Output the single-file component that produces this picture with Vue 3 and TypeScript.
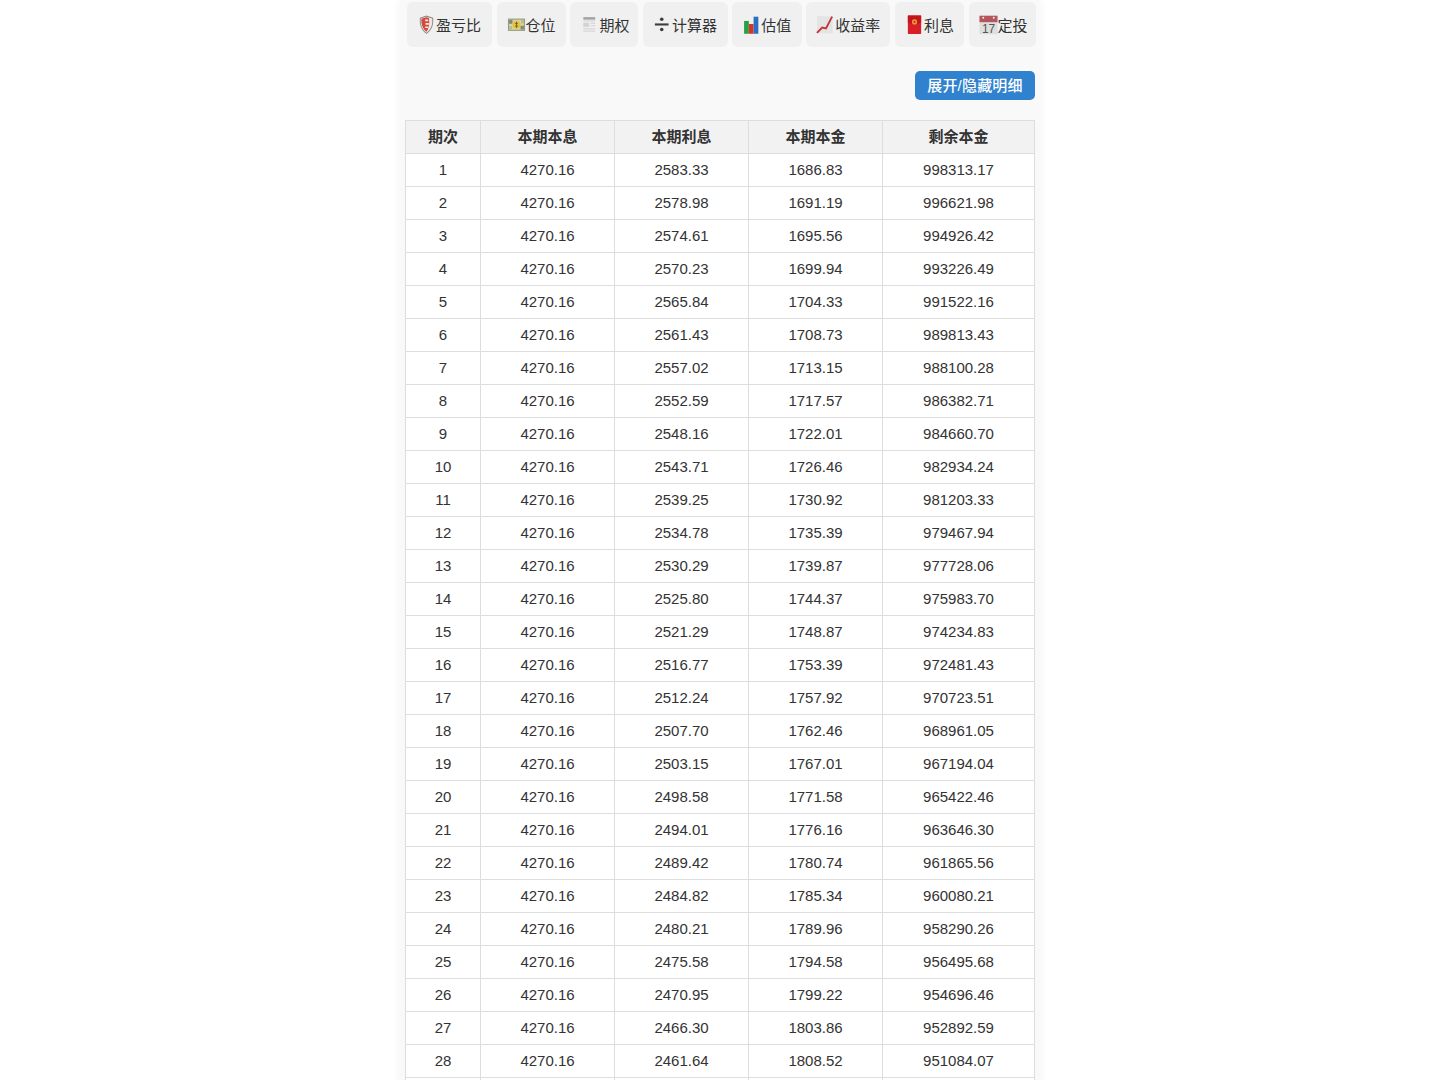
<script setup lang="ts">
const tools = [
  { icon: 'shield', label: '盈亏比', w: 85 },
  { icon: 'money', label: '仓位', w: 69.3 },
  { icon: 'news', label: '期权', w: 68 },
  { icon: 'divide', label: '计算器', w: 84.7 },
  { icon: 'bars', label: '估值', w: 69.4 },
  { icon: 'trend', label: '收益率', w: 84 },
  { icon: 'packet', label: '利息', w: 69 },
  { icon: 'calendar', label: '定投', w: 67 },
]
const headers = ['期次', '本期本息', '本期利息', '本期本金', '剩余本金']
const raw = `2583.33 1686.83 998313.17
2578.98 1691.19 996621.98
2574.61 1695.56 994926.42
2570.23 1699.94 993226.49
2565.84 1704.33 991522.16
2561.43 1708.73 989813.43
2557.02 1713.15 988100.28
2552.59 1717.57 986382.71
2548.16 1722.01 984660.70
2543.71 1726.46 982934.24
2539.25 1730.92 981203.33
2534.78 1735.39 979467.94
2530.29 1739.87 977728.06
2525.80 1744.37 975983.70
2521.29 1748.87 974234.83
2516.77 1753.39 972481.43
2512.24 1757.92 970723.51
2507.70 1762.46 968961.05
2503.15 1767.01 967194.04
2498.58 1771.58 965422.46
2494.01 1776.16 963646.30
2489.42 1780.74 961865.56
2484.82 1785.34 960080.21
2480.21 1789.96 958290.26
2475.58 1794.58 956495.68
2470.95 1799.22 954696.46
2466.30 1803.86 952892.59
2461.64 1808.52 951084.07
2456.97 1813.19 949270.88`
const rows = raw.split('\n').map((line: string, i: number) => [String(i + 1), '4270.16', ...line.split(' ')])
</script>

<template>
  <main class="page">
    <nav class="tools">
      <button v-for="t in tools" :key="t.label" class="tool" :style="{ width: t.w + 'px' }">
        <svg class="ico" viewBox="0 0 20 20" aria-hidden="true">
          <template v-if="t.icon === 'shield'">
            <path d="M3 2.5 L10 0.3 L17 2.5 C17.5 9 16.5 15 10 19.7 C3.5 15 2.5 9 3 2.5Z" fill="#8f8a86" />
            <path d="M4 3.3 L10 1.5 L16 3.3 C16.4 9 15.4 14.4 10 18.4 C4.6 14.4 3.6 9 4 3.3Z" fill="#efe9e2" />
            <path d="M4.6 3.6 L10 2 L12.6 2.8 C13.4 9 12.6 13.5 10 17.4 C5.6 14 4.3 9 4.6 3.6Z" fill="#d4493f" />
            <path d="M8.6 4.6h3.2v1.7H8.6zM9 8.2h3.4v1.7H9zM8.6 11.8h3.2v1.6H8.6z" fill="#f5ebe3" />
          </template>
          <template v-else-if="t.icon === 'money'">
            <rect x="1" y="3.5" width="18" height="13" fill="#979c86" />
            <rect x="2.2" y="4.7" width="15.6" height="10.6" fill="#d8d6a6" />
            <rect x="2.2" y="5" width="3.6" height="4" fill="#7f8a70" />
            <rect x="14.2" y="11" width="3.6" height="4" fill="#7f8a70" />
            <rect x="2.2" y="11.5" width="3" height="3.5" fill="#b9b98d" />
            <rect x="14.8" y="5" width="3" height="3.5" fill="#b9b98d" />
            <circle cx="10" cy="10" r="4.3" fill="#e6c33f" />
            <path d="M10 6.8v6.4M8.4 8.6h3M8.6 11.4h3" stroke="#6c6230" stroke-width="1" fill="none" />
          </template>
          <template v-else-if="t.icon === 'news'">
            <rect x="2" y="0.8" width="15.5" height="18.4" fill="#f0f0f0" />
            <rect x="3.5" y="2" width="12.5" height="2.6" fill="#a2a2a2" />
            <rect x="3.5" y="5.6" width="12.5" height="0.9" fill="#cdcdcd" />
            <rect x="3.5" y="8" width="6" height="4.2" fill="#d2d2d2" />
            <path d="M11 8.5h5M11 11h5M3.5 14.3h12.5M3.5 16.7h12.5" stroke="#cfcfcf" stroke-width="1" />
          </template>
          <template v-else-if="t.icon === 'divide'">
            <rect x="2" y="8.6" width="14.4" height="2.2" fill="#3d3d3d" />
            <circle cx="9.2" cy="4.2" r="1.9" fill="#3d3d3d" />
            <circle cx="9.2" cy="15" r="1.9" fill="#3d3d3d" />
          </template>
          <template v-else-if="t.icon === 'bars'">
            <rect x="2.2" y="6" width="5" height="13.5" fill="#25a244" />
            <rect x="7.2" y="9.2" width="5" height="10.3" fill="#d8342c" />
            <rect x="12.2" y="1.5" width="5" height="18" fill="#2a6fc0" />
          </template>
          <template v-else-if="t.icon === 'trend'">
            <rect x="1" y="1" width="16.5" height="18" fill="#e4e4e4" />
            <path d="M1 18.5 L6.5 13 L10.5 13.8 L17 1.5" stroke="#c2383a" stroke-width="2" fill="none" />
          </template>
          <template v-else-if="t.icon === 'packet'">
            <rect x="3" y="0.3" width="14" height="19.4" rx="0.5" fill="#d91f26" />
            <path d="M3 0.3h14v7.2q-7 3.2-14 0z" fill="#c3161c" />
            <circle cx="10" cy="7" r="2.7" fill="#ef9f3c" />
            <circle cx="10" cy="7" r="1.2" fill="#d4252a" />
          </template>
          <template v-else>
            <rect x="0.5" y="0.5" width="19" height="19.5" fill="#dedede" />
            <rect x="0.5" y="0.5" width="19" height="6.8" fill="#b5565c" />
            <circle cx="4.5" cy="2.6" r="1" fill="#f0f0f0" />
            <circle cx="15.5" cy="2.6" r="1" fill="#f0f0f0" />
            <text x="10" y="18.4" class="cal">17</text>
          </template>
        </svg>
        <span>{{ t.label }}</span>
      </button>
    </nav>
    <div class="actions">
      <button class="toggle">展开/隐藏明细</button>
    </div>
    <table class="schedule">
      <colgroup>
        <col class="c1" /><col class="c2" /><col class="c2" /><col class="c2" /><col />
      </colgroup>
      <thead>
        <tr><th v-for="h in headers" :key="h">{{ h }}</th></tr>
      </thead>
      <tbody>
        <tr v-for="r in rows" :key="r[0]">
          <td v-for="(c, i) in r" :key="i">{{ c }}</td>
        </tr>
      </tbody>
    </table>
  </main>
</template>

<style scoped>
.page {
  box-sizing: border-box;
  width: 640px;
  margin: 0 auto;
  padding: 2px 5px 20px;
  background: #f9f9f9;
  box-shadow: 0 0 10px rgba(0, 0, 0, 0.05);
  font-family: "Liberation Sans", "Noto Sans CJK SC", sans-serif;
  color: #333;
}
.tools {
  display: flex;
  gap: 4.6px;
  padding-left: 2px;
}
.tool {
  flex: none;
  display: flex;
  align-items: center;
  box-sizing: border-box;
  height: 45px;
  padding: 0 0 0 10px;
  border: 0;
  border-radius: 6px;
  background: #f0f0f0;
  color: #333;
  font: inherit;
  font-size: 15px;
  white-space: nowrap;
}
.ico {
  flex: none;
  width: 19px;
  height: 19.5px;
  overflow: visible;
}
.cal {
  font-family: "Liberation Sans", sans-serif;
  font-size: 12.5px;
  text-anchor: middle;
  fill: #555;
}
.actions {
  display: flex;
  justify-content: flex-end;
  margin-top: 24px;
}
.toggle {
  width: 120px;
  height: 29px;
  padding: 0 0 2px;
  border: 0;
  border-radius: 5px;
  background: #3182ce;
  color: #fff;
  font: inherit;
  font-size: 15px;
  font-weight: 500;
  letter-spacing: 0.2px;
  white-space: nowrap;
}
.schedule {
  width: 630px;
  margin-top: 20px;
  border-collapse: collapse;
  table-layout: fixed;
  background: #fff;
  font-size: 15px;
}
.c1 { width: 75px; }
.c2 { width: 134px; }
th, td {
  box-sizing: border-box;
  height: 33px;
  padding: 0 8px 2px;
  border: 1px solid #ddd;
  text-align: center;
}
th {
  padding-bottom: 4px;
  background: #f2f2f2;
  font-weight: 700;
}
</style>

<style>
html, body { height: 1080px; overflow: hidden; background: #fff; }
</style>
